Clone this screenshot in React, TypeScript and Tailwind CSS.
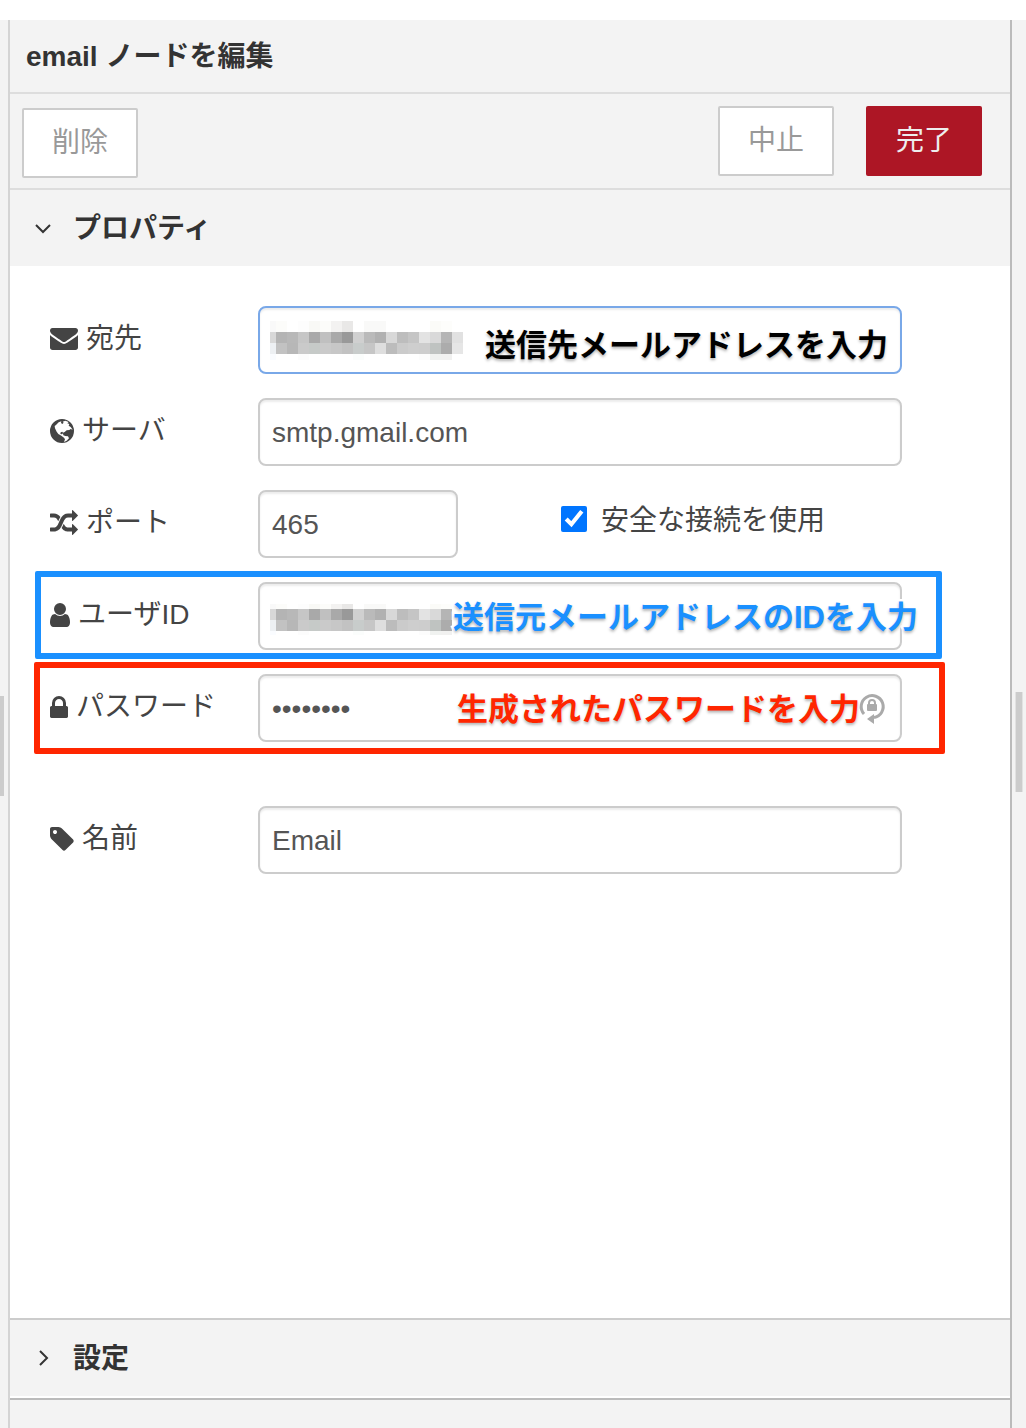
import type { ReactNode } from 'react';

const FONT = "font-['Liberation_Sans','Noto_Sans_CJK_JP',sans-serif]";

const icons = {
  envelope: {
    box: '0 256 1792 1408',
    cls: 'w-7 h-[22px]',
    d: 'M1792 710v794q0 66-47 113t-113 47h-1472q-66 0-113-47t-47-113v-794q44 49 101 87 362 246 497 345 57 42 92.5 65.5t94.5 48 110 24.5h2q51 0 110-24.5t94.5-48 92.5-65.5q170-123 498-345 57-39 100-87zm0-294q0 79-49 151t-122 123q-376 261-468 325-10 7-42.5 31t-54 38.5-52 32.5-57.5 27-50 9h-2q-23 0-50-9t-57.5-27-52-32.5-54-38.5-42.5-31q-91-64-262-182.5t-205-142.5q-62-42-117-115.5t-55-136.5q0-78 41.5-130t118.5-52h1472q65 0 112.5 47t47.5 113z',
  },
  globe: {
    box: '0 0 72 72',
    cls: 'size-6',
    d: 'M36 0a36 36 0 1 0 0 72a36 36 0 1 0 0-72zM18 18L26 10L34 7L33 12L37 15L41 11L38 8L46 5L56 9L52 13L58 15L56 20L62 24L68 32L62 30L58 33L50 34L44 39L39 41L37 38L32 40L31 45L36 46L39 43L40 49L46 51L54 52L57 58L50 65L42 69L45 61L42 56L34 50L25 45L20 38L15 28L14 21z',
  },
  random: {
    box: '0 32 1792 1664',
    cls: 'w-7 h-[26px]',
    d: 'M666 481q-60 92-137 273-22-45-37-72.5t-40.5-63.5-51-56.5-63-35-81.5-14.5h-224q-14 0-23-9t-9-23v-192q0-14 9-23t23-9h224q250 0 410 225zm1126 799q0 14-9 23l-320 320q-9 9-23 9-13 0-22.5-9.5t-9.5-22.5v-192q-32 0-85 .5t-81 1-73-1-71-5-64-10.5-63-18.5-58-28.5-59-40-55-53.5-56-69.5q59-93 136-273 22 45 37 72.5t40.5 63.5 51 56.5 63 35 81.5 14.5h256v-192q0-14 9-23t23-9q12 0 24 10l319 319q9 9 9 23zm0-896q0 14-9 23l-320 320q-9 9-23 9-13 0-22.5-9.5t-9.5-22.5v-192h-256q-48 0-87 15t-69 45-51 61.5-45 77.5q-32 62-78 171-29 66-49.5 111t-54 105-64 100-74 83-90 68.5-106.5 42-128 16.5h-224q-14 0-23-9t-9-23v-192q0-14 9-23t23-9h224q48 0 87-15t69-45 51-61.5 45-77.5q32-62 78-171 29-66 49.5-111t54-105 64-100 74-83 90-68.5 106.5-42 128-16.5h256v-192q0-14 9-23t23-9q12 0 24 10l319 319q9 9 9 23z',
  },
  user: {
    box: '256 128 1280 1536',
    cls: 'w-5 h-6',
    d: 'M1536 1399q0 109-62.5 187t-150.5 78h-854q-88 0-150.5-78t-62.5-187q0-85 8.5-160.5t31.5-152 58.5-131 94-89 134.5-34.5q131 128 313 128t313-128q76 0 134.5 34.5t94 89 58.5 131 31.5 152 8.5 160.5zm-256-887q0 159-112.5 271.5t-271.5 112.5-271.5-112.5-112.5-271.5 112.5-271.5 271.5-112.5 271.5 112.5 112.5 271.5z',
  },
  lock: {
    box: '320 128 1152 1408',
    cls: 'w-[18px] h-[22px]',
    d: 'M640 768h512v-192q0-106-75-181t-181-75-181 75-75 181v192zm832 96v576q0 40-28 68t-68 28h-960q-40 0-68-28t-28-68v-576q0-40 28-68t68-28h32v-192q0-184 132-316t316-132 316 132 132 316v192h32q40 0 68 28t28 68z',
  },
  tag: {
    box: '128 128 1536 1536',
    cls: 'size-6',
    d: 'M576 448q0-53-37.5-90.5t-90.5-37.5-90.5 37.5-37.5 90.5 37.5 90.5 90.5 37.5 90.5-37.5 37.5-90.5zm1067 576q0 53-37 90l-491 492q-39 37-91 37-53 0-90-37l-715-716q-38-37-64.5-101t-26.5-117v-416q0-52 38-90t90-38h416q53 0 117 26.5t102 64.5l715 714q37 39 37 91z',
  },
};

function Icon({ name }: { name: keyof typeof icons }) {
  const icon = icons[name];
  return (
    <svg viewBox={icon.box} className={`${icon.cls} shrink-0`} fill="currentColor" fillRule="evenodd" aria-hidden="true">
      <path d={icon.d} />
    </svg>
  );
}

const mosaicRows = [
  ['#f9f9f9', '#fcfcfa', '#fff', '#fdfdfd', '#f9f9f6', '#fcfcfa', '#f3f2f1', '#e9e8e7', '#fff', '#f9f9f8', '#f9f9f8', '#fff', '#fff', '#fff', '#fff', '#fbfbf8', '#fdfdfb', '#fff'],
  ['#d8d8d8', '#b4b4b4', '#b8b8b8', '#c6c6c6', '#a9a9a9', '#c0c0c0', '#a9a9a9', '#999', '#d0d0d0', '#bababa', '#b1b1b1', '#d8d8d8', '#bdbdbd', '#c5c5c5', '#e3e3e3', '#d9d9d9', '#b5b5b5', '#e1e1e1'],
  ['#edf0f3', '#c2c2c2', '#b7b7b7', '#cacaca', '#c6cac8', '#cacaca', '#c7c7c7', '#c2c2c2', '#c8cccb', '#c6c6c6', '#dedede', '#bcbcbc', '#cbcbcb', '#cecece', '#cdcdcd', '#bfc3c1', '#acacac', '#e6e6e6'],
  ['#fafcff', '#fff', '#fff', '#fcfcfc', '#fff', '#fff', '#fff', '#fff', '#fbfdfc', '#fff', '#fff', '#fff', '#fff', '#fff', '#fcfcfc', '#f0f2f0', '#f1f1f0', '#fff'],
];

/* Pixelated block that hides a private value. */
function Mosaic({ columns, tops }: { columns: number; tops: number[] }) {
  return (
    <svg width="193" height="40" className="pointer-events-none absolute left-3 top-3.5" shapeRendering="crispEdges" aria-hidden="true">
      {mosaicRows.map((row, r) =>
        row.slice(0, columns).map((fill, c) => (
          <rect key={`${r}-${c}`} x={c === 0 ? 0 : 6 + (c - 1) * 11} y={tops[r]} width={c === 0 ? 6 : 11} height={tops[r + 1] - tops[r]} fill={fill} />
        )),
      )}
    </svg>
  );
}

const INPUT =
  'block h-[68px] w-full rounded-lg border-2 border-[#ccc] bg-white px-3 pt-0.5 text-[28px] text-[#555] outline-none shadow-[inset_0_2px_2px_rgba(0,0,0,0.075)]';

const NOTE =
  'pointer-events-none absolute whitespace-nowrap text-[31px] leading-[44px] font-bold [-webkit-text-stroke:5px_white] [paint-order:stroke_fill] [text-shadow:0_2px_3px_rgba(0,0,0,0.3)]';

function Row({ id, icon, label, children }: { id: string; icon: keyof typeof icons; label: string; children: ReactNode }) {
  return (
    <div className="relative flex items-center">
      <label htmlFor={id} className="flex w-[208px] shrink-0 items-center gap-2 pb-0.5 text-[28px] leading-10 text-[#444]">
        <Icon name={icon} />
        <span>{label}</span>
      </label>
      {children}
    </div>
  );
}

function ResetLockIcon() {
  return (
    <svg viewBox="0 0 28 34" className="pointer-events-none absolute right-4 top-4 h-[34px] w-7" fill="none" aria-hidden="true">
      <path d="M6 24A11 11 0 1 1 16 27.500" stroke="#aaa" strokeWidth="3" />
      <path d="M9 29l7-5v10z" fill="#aaa" />
      <path d="M11 15v-2a3 3 0 0 1 6 0v2" stroke="#aaa" strokeWidth="2" />
      <rect x="9" y="14" width="10" height="7" rx="1" fill="#aaa" />
    </svg>
  );
}

export default function App() {
  return (
    <div className={`flex min-h-screen flex-col bg-white pt-5 ${FONT}`}>
      <div className="flex flex-1">
        <div className="w-2 shrink-0 bg-[#f3f3f3]">
          <div className="mt-[676px] h-[100px] w-1 bg-[#ccc]" />
        </div>
        <main className="flex min-w-0 flex-1 flex-col border-l-2 border-r-2 border-l-[#d4d4d4] border-r-[#bbb] bg-white">
          <h1 className="border-b-2 border-[#ddd] bg-[#f3f3f3] px-4 pt-[17px] pb-[15px] text-[28px] leading-10 font-bold text-[#333]">email ノードを編集</h1>
          <div className="flex items-start border-b-2 border-[#ddd] bg-[#f3f3f3] pt-3 pr-7 pb-2.5 pl-3 text-[28px] leading-10">
            <button type="button" className="mt-0.5 h-[70px] w-[116px] rounded-xs border-2 border-[#ccc] bg-white text-[#999]">削除</button>
            <button type="button" className="ml-auto h-[70px] w-[116px] rounded-xs border-2 border-[#ccc] bg-white text-[#999]">中止</button>
            <button type="button" className="ml-8 h-[70px] w-[116px] rounded-xs bg-[#ad1625] text-[#eee]">完了</button>
          </div>
          <button type="button" aria-expanded="true" className="flex h-[76px] items-center gap-[19px] bg-[#f3f3f3] px-6 text-left text-[28px] leading-10 font-bold text-[#333]">
            <svg viewBox="0 0 20 20" className="size-5" fill="none" stroke="currentColor" strokeWidth="2" aria-hidden="true">
              <path d="M2 7l7 7 7-7" />
            </svg>
            <span className="pt-0.5">プロパティ</span>
          </button>
          <form className="flex flex-1 flex-col gap-6 pt-10 pr-[108px] pb-10 pl-10">
            <Row id="to" icon="envelope" label="宛先">
              <div className="relative flex-1">
                <input id="to" className={`${INPUT} border-[#79a8e8]!`} />
                <Mosaic columns={18} tops={[1, 12, 23, 34, 40]} />
                <span className={`${NOTE} right-3.5 top-[18px] text-black`}>送信先メールアドレスを入力</span>
              </div>
            </Row>
            <Row id="server" icon="globe" label="サーバ">
              <div className="flex-1">
                <input id="server" defaultValue="smtp.gmail.com" className={INPUT} />
              </div>
            </Row>
            <Row id="port" icon="random" label="ポート">
              <div className="w-[200px]">
                <input id="port" defaultValue="465" className={INPUT} />
              </div>
              <label className="ml-[103px] flex items-center gap-3.5 pb-2.5 text-[28px] leading-10 text-[#444]">
                <input type="checkbox" defaultChecked className="size-[26px] accent-[#0075ff]" />
                <span className="pt-1">安全な接続を使用</span>
              </label>
            </Row>
            <Row id="userid" icon="user" label="ユーザID">
              <div className="relative flex-1">
                <input id="userid" className={INPUT} />
                <Mosaic columns={17} tops={[8, 13, 24, 35, 39]} />
                <span className={`${NOTE} -right-4 top-3.5 text-[#1a90ff]`}>送信元メールアドレスのIDを入力</span>
              </div>
              <div className="pointer-events-none absolute -top-[11px] -right-10 -bottom-[9px] -left-[15px] rounded-xs border-6 border-[#1a90ff]" />
            </Row>
            <Row id="password" icon="lock" label="パスワード">
              <div className="relative flex-1">
                <input id="password" type="password" defaultValue="password" className={INPUT} />
                <span className={`${NOTE} right-[42px] top-3.5 text-[#ff2600]`}>生成されたパスワードを入力</span>
                <ResetLockIcon />
              </div>
              <div className="pointer-events-none absolute -top-3 -right-[43px] -bottom-3 -left-4 rounded-xs border-6 border-[#ff2600]" />
            </Row>
            <div className="mt-10">
              <Row id="name" icon="tag" label="名前">
                <div className="flex-1">
                  <input id="name" defaultValue="Email" className={INPUT} />
                </div>
              </Row>
            </div>
          </form>
          <button type="button" aria-expanded="false" className="flex h-[78px] items-center gap-[19px] border-t-2 border-[#ccc] bg-[#f3f3f3] px-6 text-left text-[28px] leading-10 font-bold text-[#333]">
            <svg viewBox="0 0 20 20" className="size-5" fill="none" stroke="currentColor" strokeWidth="2" aria-hidden="true">
              <path d="M6 3l7 7-7 7" />
            </svg>
            <span className="pt-0.5">設定</span>
          </button>
          <footer className="mt-0.5 h-[30px] border-t-2 border-[#bbb] bg-[#f3f3f3]" />
        </main>
        <div className="w-3.5 shrink-0 bg-[#f3f3f3]">
          <div className="mt-[672px] ml-[3px] h-[100px] w-2 border-x border-[#e2e2e2] bg-[#ccc]" />
        </div>
      </div>
    </div>
  );
}
